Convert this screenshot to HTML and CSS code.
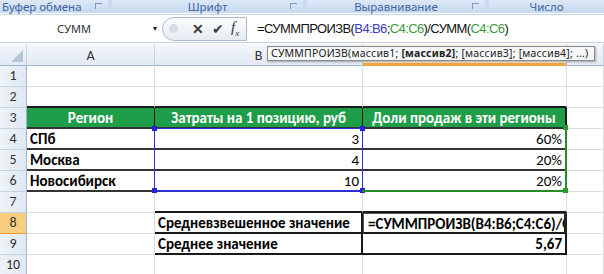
FILE: index.html
```html
<!DOCTYPE html>
<html lang="ru">

<head>
    <meta charset="UTF-8">
    <title>СУММПРОИЗВ</title>
    <link rel="stylesheet" href="styles.css">
</head>

<body>
    <div class="ribbon">
        <div class="grp g1">Буфер обмена <span class="launch"></span></div>
        <div class="grp g2">Шрифт <span class="launch"></span></div>
        <div class="grp g3">Выравнивание <span class="launch"></span></div>
        <div class="grp g4">Число</div>
    </div>

    <div class="fbar">
        <div class="namebox">СУММ</div>
        <div class="nbarrow">&#9660;</div>
        <div class="btns">
            <span class="knob"></span>
            <span class="bx">&#10005;</span>
            <span class="bok">&#10004;</span>
            <span class="bfx">f<sub>x</sub></span>
        </div>
        <div class="formula">=СУММПРОИЗВ(<span class="rb">B4:B6</span>;<span class="rc">C4:C6</span>)/СУММ(<span class="rc">C4:C6</span>)</div>
    </div>

    <div class="sheet">
        <div class="grid">
            <!-- header -->
            <div class="hd corner"><span class="tri"></span></div>
            <div class="hd">A</div>
            <div class="hd">B</div>
            <div class="hd hd-on">C</div>
            <div class="hd">D</div>

            <!-- 1 -->
            <div class="rh">1</div>
            <div class="c"></div><div class="c"></div><div class="c"></div><div class="c"></div>
            <!-- 2 -->
            <div class="rh">2</div>
            <div class="c top"></div><div class="c top"></div><div class="c top"></div><div class="c"></div>
            <!-- 3 -->
            <div class="rh">3</div>
            <div class="c t th">Регион</div>
            <div class="c t th">Затраты на 1 позицию, руб</div>
            <div class="c t th last">Доли продаж в эти регионы</div>
            <div class="c"></div>
            <!-- 4 -->
            <div class="rh">4</div>
            <div class="c t b">СПб</div>
            <div class="c t num">3</div>
            <div class="c t num last">60%</div>
            <div class="c"></div>
            <!-- 5 -->
            <div class="rh">5</div>
            <div class="c t b">Москва</div>
            <div class="c t num">4</div>
            <div class="c t num last">20%</div>
            <div class="c"></div>
            <!-- 6 -->
            <div class="rh">6</div>
            <div class="c t b">Новосибирск</div>
            <div class="c t num">10</div>
            <div class="c t num last">20%</div>
            <div class="c"></div>
            <!-- 7 -->
            <div class="rh">7</div>
            <div class="c"></div><div class="c top"></div><div class="c top"></div><div class="c"></div>
            <!-- 8 -->
            <div class="rh rh-on">8</div>
            <div class="c"></div>
            <div class="c bx2 b">Средневзвешенное значение</div>
            <div class="c bx2 edit b">=СУММПРОИЗВ(B4:B6;C4:C6)/СУММ(C4:C6)</div>
            <div class="c"></div>
            <!-- 9 -->
            <div class="rh">9</div>
            <div class="c"></div>
            <div class="c bx2 b">Среднее значение</div>
            <div class="c bx2 b num last">5,67</div>
            <div class="c"></div>
            <!-- 10 -->
            <div class="rh">10</div>
            <div class="c"></div><div class="c"></div><div class="c"></div><div class="c"></div>
        </div>

        <!-- range highlights from the formula, laid over the cells -->
        <div class="grid marks">
            <div class="range rng-b">
                <span class="h tl"></span><span class="h tr"></span><span class="h bl"></span><span class="h br"></span>
            </div>
            <div class="range rng-c">
                <span class="h tr"></span><span class="h br"></span>
            </div>
        </div>

        <div class="tip">СУММПРОИЗВ(массив1; <b>[массив2]</b>; [массив3]; [массив4]; ...)</div>
    </div>
</body>

</html>
```

FILE: styles.css
```css
* {
    margin: 0;
    padding: 0;
    box-sizing: border-box;
}

body {
    width: 604px;
    height: 274px;
    overflow: hidden;
    background: #fff;
    font-family: "Noto Sans", "Open Sans", sans-serif;
}

/* ribbon group captions */
.ribbon {
    display: flex;
    gap: 4px;
    height: 13px;
    background: #c9daf0;
}

.grp {
    position: relative;
    height: 13px;
    background: linear-gradient(#dde8f6, #c7d9ef);
    border-radius: 0 0 3px 3px;
    color: #3a64a4;
    font-size: 11.5px;
    line-height: 13px;
    text-align: center;
}

.g1 {
    width: 108px;
    text-align: left;
    padding-left: 2px;
}

.g2 {
    width: 191px;
}

.g3 {
    width: 178px;
}

.g4 {
    flex: 1;
}

.launch {
    position: absolute;
    right: 6px;
    top: 3px;
    width: 7px;
    height: 6px;
    border: 1px solid #7d98c0;
    border-width: 1px 0 0 1px;
}

/* formula bar */
.fbar {
    display: flex;
    align-items: center;
    height: 29px;
    margin-top: 1px;
    background: #fff;
    border-top: 1px solid #c5d4e8;
    border-bottom: 1px solid #c9d3df;
}

.namebox {
    width: 148px;
    text-align: center;
    font-size: 11px;
    color: #333;
}

.nbarrow {
    width: 14px;
    font-size: 7px;
    color: #222;
    text-align: center;
}

.btns {
    display: flex;
    align-items: center;
    width: 85px;
    height: 24px;
    border: 1px solid #a9bcd3;
    border-radius: 12px 0 0 12px;
    background: linear-gradient(#fdfdfe, #e6ecf3);
    padding-left: 6px;
}

.knob {
    width: 9px;
    height: 9px;
    border-radius: 50%;
    background: #d4dbe4;
    margin-right: 14px;
}

.bx {
    font-size: 14px;
    font-weight: bold;
    color: #3c3c3c;
    margin-right: 8px;
}

.bok {
    font-size: 14px;
    color: #3c3c3c;
    margin-right: 7px;
}

.bfx {
    font-family: "Liberation Serif", serif;
    font-style: italic;
    font-size: 15px;
    color: #333;
}

.bfx sub {
    font-size: 9px;
}

.formula {
    flex: 1;
    padding-left: 10px;
    font-family: "Liberation Sans", sans-serif;
    font-size: 13px;
    letter-spacing: -0.6px;
    color: #111;
    white-space: nowrap;
}

.rb {
    color: #3b3bc4;
}

.rc {
    color: #3b9a3b;
}

/* worksheet */
.sheet {
    position: relative;
    margin-top: 1px;
    font-family: "Carlito", "Liberation Sans", sans-serif;
    font-size: 15px;
}

.grid {
    display: grid;
    grid-template-columns: 27px 128px 208px 204px 37px;
    grid-template-rows: 22px repeat(10, 21px);
}

.marks {
    position: absolute;
    inset: 0;
    pointer-events: none;
}

.hd {
    background: linear-gradient(#f4f7fb, #e2e9f3);
    border-right: 1px solid #c5d2e2;
    border-bottom: 1px solid #9eb6ce;
    text-align: center;
    padding-top: 3px;
    line-height: 18px;
    color: #333;
    font-size: 14px;
}

.corner {
    position: relative;
}

.tri {
    position: absolute;
    right: 3px;
    bottom: 3px;
    border-left: 12px solid transparent;
    border-bottom: 12px solid #b6c7dc;
}

.hd-on {
    background: linear-gradient(#fbf7ef, #f7ecd6);
    border-bottom: 3px solid #f3a640;
}

.rh {
    background: linear-gradient(90deg, #eef3f9, #e0e8f2);
    border-right: 1px solid #9eb6ce;
    border-bottom: 1px solid #c5d2e2;
    text-align: center;
    line-height: 20px;
    color: #333;
    font-size: 14px;
}

.rh-on {
    background: #f8cd80;
    border-bottom-color: #f29536;
}

.c {
    border-right: 1px solid #d8dde6;
    border-bottom: 1px solid #d8dde6;
    padding: 0 3px;
    line-height: 20px;
    white-space: nowrap;
    overflow: hidden;
}

.c.top {
    border-bottom: 2px solid #1a1a1a;
}

.t {
    border-right: 1px solid #1a1a1a;
    border-bottom: 2px solid #333;
}

.t.last {
    border-right: 2px solid #1a1a1a;
}

.th {
    background: #1f9e49;
    color: #fff;
    font-weight: bold;
    text-align: center;
}

.b {
    font-weight: bold;
}

.num {
    text-align: right;
}

.bx2 {
    border-right: 2px solid #1a1a1a;
    border-bottom: 2px solid #1a1a1a;
}

.edit {
    border: 1px solid #555;
    border-right: 3px solid #222;
    border-bottom: 2px solid #1a1a1a;
    padding-left: 4px;
    text-overflow: clip;
}

.range {
    position: relative;
    grid-row: 5 / 8;
    margin: -1px 0 0 -1px;
}

.rng-b {
    grid-column: 3;
    border: 1px solid #2f2fd8;
    border-bottom-width: 2px;
}

.rng-c {
    grid-column: 4;
    border-bottom: 2px solid #2a8a2a;
    border-right: 2px solid #2a8a2a;
}

.h {
    position: absolute;
    width: 5px;
    height: 5px;
}

.rng-b .h {
    background: #2222dd;
}

.rng-c .h {
    background: #2a9a2a;
}

.h.tl {
    left: -3px;
    top: -3px;
}

.h.tr {
    right: -3px;
    top: -3px;
}

.h.bl {
    left: -3px;
    bottom: -3px;
}

.h.br {
    right: -3px;
    bottom: -3px;
}

.tip {
    position: absolute;
    left: 267px;
    top: 2px;
    width: 328px;
    height: 15px;
    background: #f7f8fa;
    border: 1px solid #8a8a8a;
    box-shadow: 1px 1px 2px rgba(0, 0, 0, 0.3);
    font-family: "Noto Sans", "Open Sans", sans-serif;
    font-size: 10.5px;
    letter-spacing: 0.2px;
    line-height: 13px;
    padding-left: 3px;
    color: #222;
    white-space: nowrap;
    overflow: hidden;
}
```
